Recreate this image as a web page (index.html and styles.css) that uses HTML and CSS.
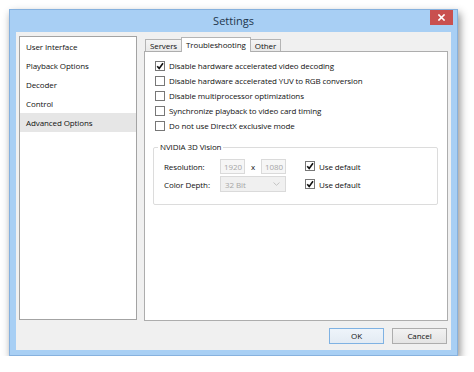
FILE: index.html
```html
<!DOCTYPE html>
<html>
<head>
<meta charset="utf-8">
<link rel="stylesheet" href="styles.css">
</head>
<body>
<div class="window">
  <div class="titlebar">
    <span class="spacer"></span>
    <span class="title">Settings</span>
    <span class="close-wrap"><span class="close"><svg width="7" height="7" viewBox="0 0 7 7"><path d="M1 1 L6 6 M6 1 L1 6" stroke="#fff" stroke-width="1.6" stroke-linecap="square"/></svg></span></span>
  </div>
  <div class="client">
    <div class="main">
      <ul class="nav">
        <li class="nav-item">User Interface</li>
        <li class="nav-item">Playback Options</li>
        <li class="nav-item">Decoder</li>
        <li class="nav-item">Control</li>
        <li class="nav-item selected">Advanced Options</li>
      </ul>
      <div class="tabs-area">
        <div class="tabstrip">
          <div class="tab">Servers</div>
          <div class="tab active">Troubleshooting</div>
          <div class="tab">Other</div>
        </div>
        <div class="panel">
          <div class="check"><span class="box"><svg width="8" height="8" viewBox="0 0 8 8"><path d="M1.2 4.2 L3.2 6.4 L7 1.2" fill="none" stroke="#111" stroke-width="1.6"/></svg></span>Disable hardware accelerated video decoding</div>
          <div class="check"><span class="box"></span>Disable hardware accelerated YUV to RGB conversion</div>
          <div class="check"><span class="box"></span>Disable multiprocessor optimizations</div>
          <div class="check"><span class="box"></span>Synchronize playback to video card timing</div>
          <div class="check"><span class="box"></span>Do not use DirectX exclusive mode</div>
          <fieldset class="group">
            <legend class="legend">NVIDIA 3D Vision</legend>
            <div class="grow">
              <span class="lbl">Resolution:</span>
              <span class="input">1920</span>
              <span class="times">x</span>
              <span class="input">1080</span>
              <span class="check inline"><span class="box"><svg width="8" height="8" viewBox="0 0 8 8"><path d="M1.2 4.2 L3.2 6.4 L7 1.2" fill="none" stroke="#111" stroke-width="1.6"/></svg></span>Use default</span>
            </div>
            <div class="grow">
              <span class="lbl">Color Depth:</span>
              <span class="select">32 Bit<svg class="arrow" width="7" height="4" viewBox="0 0 7 4"><path d="M0.5 0.5 L3.5 3.3 L6.5 0.5" fill="none" stroke="#c4c4c4" stroke-width="1"/></svg></span>
              <span class="check inline"><span class="box"><svg width="8" height="8" viewBox="0 0 8 8"><path d="M1.2 4.2 L3.2 6.4 L7 1.2" fill="none" stroke="#111" stroke-width="1.6"/></svg></span>Use default</span>
            </div>
          </fieldset>
        </div>
      </div>
    </div>
    <div class="buttons">
      <div class="btn default">OK</div>
      <div class="btn">Cancel</div>
    </div>
  </div>
</div>
</body>
</html>
```

FILE: styles.css
```css
html, body {
  margin: 0;
  padding: 0;
  background: #ffffff;
}
body {
  font-family: "Open Sans", "Noto Sans", "Liberation Sans", sans-serif;
  font-size: 8px;
  letter-spacing: -0.1px;
  color: #111111;
}
.window {
  margin: 9px 0 0 9px;
  width: 449px;
  box-sizing: border-box;
  background: #a8cff4;
  border: 1px solid #86b1de;
  padding: 0 6px 5px 6px;
  box-shadow: 2px 4px 8px rgba(0, 0, 0, 0.45);
}
.titlebar {
  height: 22px;
  margin: 0 -6px;
  display: grid;
  grid-template-columns: 1fr auto 1fr;
  align-items: center;
}
.title {
  font-size: 11px;
  letter-spacing: 0;
  color: #22364c;
  line-height: 22px;
}
.close-wrap {
  justify-self: end;
  align-self: start;
  padding-right: 4px;
}
.close {
  width: 23px;
  height: 15px;
  background: #c9504f;
  display: flex;
  align-items: center;
  justify-content: center;
}
.client {
  background: #f0f0f0;
  padding: 4px 3px 6px 3px;
}
.main {
  height: 285px;
  display: grid;
  grid-template-columns: 118px 1fr;
  column-gap: 7px;
}
.nav {
  margin: 0;
  padding: 0;
  list-style: none;
  height: 284px;
  box-sizing: border-box;
  background: #ffffff;
  border: 1px solid #a3a3a3;
}
.nav-item {
  height: 19px;
  line-height: 19px;
  padding-left: 6px;
}
.nav-item.selected {
  background: #e6e6e6;
}
.tabs-area {
  display: flex;
  flex-direction: column;
  padding-top: 1px;
}
.tabstrip {
  display: flex;
  align-items: flex-end;
  padding-left: 1px;
  height: 14px;
}
.tab {
  height: 12px;
  line-height: 11px;
  box-sizing: border-box;
  padding: 0 4px;
  border: 1px solid #b4b4b4;
  border-bottom: none;
  background: linear-gradient(#f4f4f4, #e9e9e9);
  margin-right: -1px;
}
.tab.active {
  position: relative;
  height: 15px;
  line-height: 13px;
  margin-bottom: -1px;
  background: #ffffff;
  padding: 0 4px;
}
.panel {
  flex: 1;
  background: #ffffff;
  border: 1px solid #adadad;
  padding: 6px 9px 0 8px;
}
.check {
  display: flex;
  align-items: center;
  height: 15px;
  padding-left: 2px;
}
.check.inline {
  display: inline-flex;
  padding-left: 0;
  height: 16px;
}
.box {
  width: 10px;
  height: 10px;
  box-sizing: border-box;
  border: 1px solid #777777;
  background: #ffffff;
  margin-right: 4px;
  display: flex;
  align-items: center;
  justify-content: center;
  flex: none;
}
.group {
  margin: 8px 0 0 0;
  border: 1px solid #dcdcdc;
  border-radius: 2px;
  padding: 5px 6px 12px 10px;
  min-width: 0;
}
.legend {
  padding: 0 2px;
  margin-left: -6px;
  line-height: 12px;
}
.grow {
  display: flex;
  align-items: center;
  height: 16px;
  margin-bottom: 2px;
}
.grow:last-child {
  margin-bottom: 0;
}
.lbl {
  width: 56px;
}
.input {
  width: 25px;
  height: 15px;
  box-sizing: border-box;
  border: 1px solid #dadada;
  background: #f6f6f6;
  color: #a6a6a6;
  padding-left: 3px;
  line-height: 13px;
}
.times {
  width: 16px;
  text-align: center;
}
.select {
  width: 66px;
  height: 16px;
  box-sizing: border-box;
  border: 1px solid #dadada;
  background: #f0f0f0;
  color: #a6a6a6;
  padding: 0 5px 0 4px;
  display: flex;
  align-items: center;
  justify-content: space-between;
}
.grow .check.inline {
  margin-left: 19px;
}
.buttons {
  margin-top: 7px;
  display: flex;
  justify-content: flex-end;
  gap: 8px;
  padding-right: 1px;
}
.btn {
  width: 55px;
  height: 16px;
  box-sizing: border-box;
  border: 1px solid #adadad;
  background: linear-gradient(#f2f2f2, #e4e4e4);
  text-align: center;
  line-height: 14px;
}
.btn.default {
  border-color: #7fb2e3;
  background: linear-gradient(#eef4fa, #e3ebf3);
}
```
